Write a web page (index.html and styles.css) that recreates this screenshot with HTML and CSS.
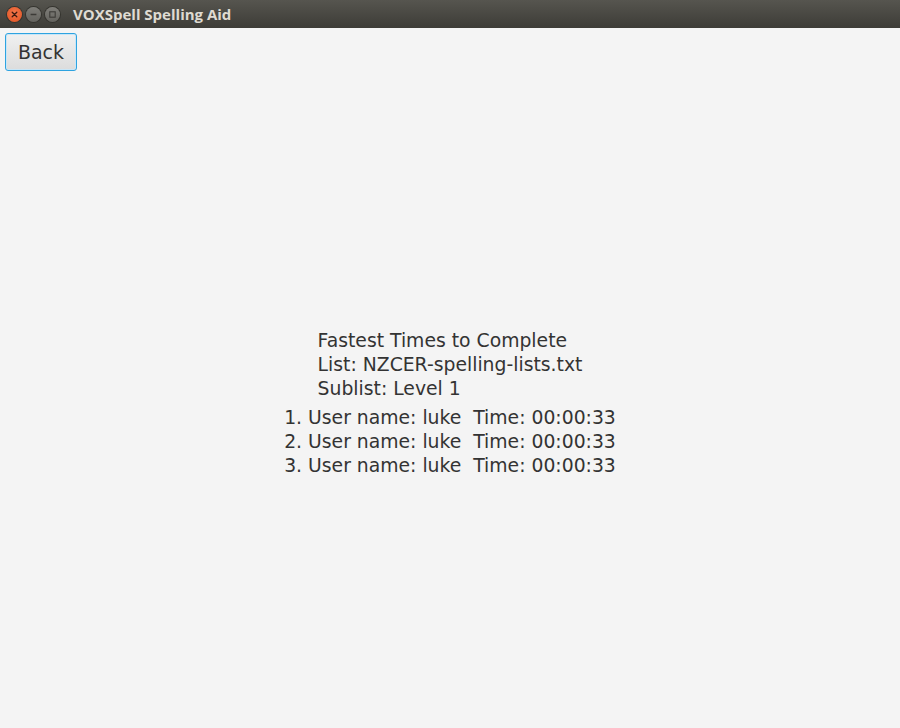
FILE: index.html
```html
<!DOCTYPE html>
<html>
<head>
<meta charset="utf-8">
<link rel="stylesheet" href="styles.css">
</head>
<body>
<div class="window">
  <div class="titlebar">
    <div class="controls">
      <span class="ctl close">
        <svg width="15" height="15" viewBox="0 0 15 15"><path d="M5.2 5.2 L9.8 9.8 M9.8 5.2 L5.2 9.8" stroke="#3a1a10" stroke-width="1.3" stroke-linecap="round"/></svg>
      </span>
      <span class="ctl">
        <svg width="15" height="15" viewBox="0 0 15 15"><path d="M4.6 7.5 H10.4" stroke="#3c3b37" stroke-width="1.5"/></svg>
      </span>
      <span class="ctl">
        <svg width="15" height="15" viewBox="0 0 15 15"><rect x="4.8" y="4.8" width="5.4" height="5.4" fill="none" stroke="#3c3b37" stroke-width="1.1"/></svg>
      </span>
    </div>
    <div class="title">VOXSpell Spelling Aid</div>
  </div>
  <div class="content">
    <div class="toolbar">
      <button class="back">Back</button>
    </div>
    <div class="center">
      <div class="header">
        <div class="line">Fastest Times to Complete</div>
        <div class="line">List: NZCER-spelling-lists.txt</div>
        <div class="line">Sublist: Level 1</div>
      </div>
      <div class="scores">
        <div class="line">1. User name: luke&nbsp;&nbsp;Time: 00:00:33</div>
        <div class="line">2. User name: luke&nbsp;&nbsp;Time: 00:00:33</div>
        <div class="line">3. User name: luke&nbsp;&nbsp;Time: 00:00:33</div>
      </div>
    </div>
  </div>
</div>
</body>
</html>
```

FILE: styles.css
```css
html, body {
  margin: 0;
  padding: 0;
}
body {
  background: #f4f4f4;
  font-family: "DejaVu Sans", sans-serif;
  color: #333333;
}
.window {
  width: 900px;
  height: 728px;
  display: flex;
  flex-direction: column;
  overflow: hidden;
}
.titlebar {
  height: 28px;
  flex: 0 0 28px;
  background: linear-gradient(#56554f, #3d3c37);
  display: flex;
  align-items: center;
  box-sizing: border-box;
  padding-left: 7px;
}
.controls {
  display: flex;
  gap: 4px;
}
.ctl {
  width: 15px;
  height: 15px;
  border-radius: 50%;
  background: linear-gradient(#7f7e79, #64635e);
  display: flex;
  align-items: center;
  justify-content: center;
  box-shadow: 0 0 0 1px #35342f;
}
.ctl.close {
  background: radial-gradient(circle at 50% 40%, #f4784c, #e0501f);
}
.title {
  margin-left: 13px;
  color: #dfdbd2;
  font-family: "Open Sans", "DejaVu Sans", sans-serif;
  font-weight: bold;
  font-size: 15px;
}
.content {
  flex: 1;
  display: flex;
  flex-direction: column;
}
.toolbar {
  padding: 5px 0 0 5px;
}
.back {
  width: 72px;
  height: 38px;
  box-sizing: border-box;
  border: 1px solid #2ea3e0;
  border-radius: 3px;
  background: linear-gradient(#f0f0f0, #dcdcdc);
  box-shadow: inset 0 0 0 1px #c9e6f7;
  font-family: "DejaVu Sans", sans-serif;
  font-size: 19px;
  color: #333333;
  padding: 0;
}
.center {
  flex: 1;
  display: flex;
  flex-direction: column;
  align-items: center;
  justify-content: center;
  gap: 5px;
  padding-top: 8px;
}
.header, .scores {
  display: flex;
  flex-direction: column;
}
.line {
  font-size: 18.8px;
  line-height: 24px;
  white-space: nowrap;
}
```
